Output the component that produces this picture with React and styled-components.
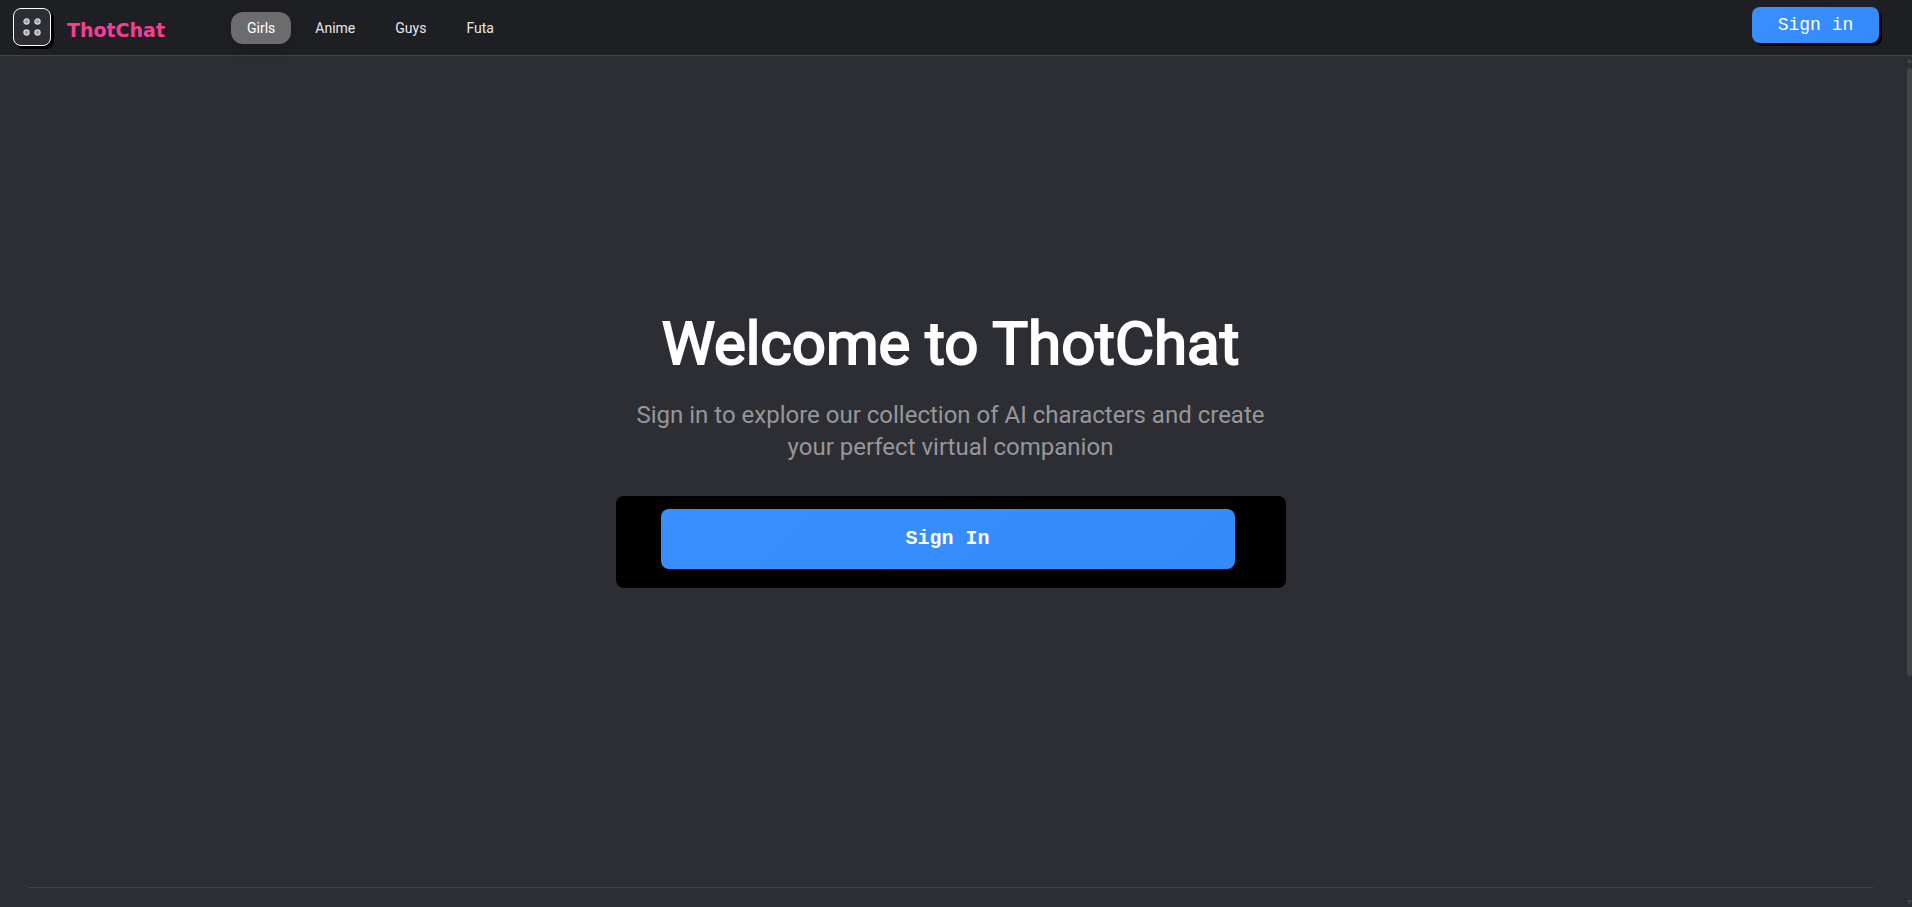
import React from "react";
import styled, { createGlobalStyle } from "styled-components";

const GlobalStyle = createGlobalStyle`
  *, *::before, *::after { box-sizing: border-box; }
  body {
    margin: 0;
    background: #2d2e33;
    color: #fff;
    font-family: Roboto, "Liberation Sans", sans-serif;
  }
`;

const Page = styled.div`
  height: 100vh;
  display: flex;
  flex-direction: column;
`;

const Header = styled.header`
  display: flex;
  align-items: flex-start;
  height: 56px;
  flex: none;
  padding: 0 33px 0 13px;
  background: #1e1f22;
  border-bottom: 1px solid #434447;
`;

const MenuButton = styled.button`
  display: grid;
  place-items: center;
  width: 38px;
  height: 38px;
  margin-top: 8px;
  padding: 0;
  border: 1px solid #fff;
  border-radius: 8px;
  background: #2d2e33;
  box-shadow: 3px 3px 0 #000;
`;

const Logo = styled.a`
  width: 164px;
  margin: 18px 0 0 16px;
  color: #f53f97;
  font-family: "DejaVu Sans", sans-serif;
  font-size: 19px;
  font-weight: 700;
  line-height: 24px;
  text-decoration: none;
`;

const Nav = styled.nav`
  display: flex;
  flex: 1;
  gap: 8px;
  margin-top: 12px;
`;

const NavLink = styled.a`
  padding: 0 16px;
  border-radius: 12px;
  color: ${(p) => (p.$active ? "#fff" : "#e8e8e9")};
  background: ${(p) => (p.$active ? "#6c6c6e" : "transparent")};
  box-shadow: ${(p) => (p.$active ? "0 4px 12px rgba(0, 0, 0, 0.15)" : "none")};
  font-size: 14px;
  font-weight: 400;
  line-height: 32px;
  text-decoration: none;
`;

const BlueButton = styled.button`
  border: 0;
  border-radius: 8px;
  color: #fff;
  background: linear-gradient(135deg, #3a8fff, #348af8);
  font-family: "Liberation Mono", monospace;
`;

const HeaderSignIn = styled(BlueButton)`
  width: 127px;
  height: 36px;
  margin-top: 7px;
  padding: 0;
  box-shadow: 3px 3px 0 #000;
  font-size: 18px;
`;

const Content = styled.div`
  display: flex;
  flex: 1;
  min-height: 0;
`;

const Main = styled.main`
  display: flex;
  flex: 1;
  flex-direction: column;
  padding: 0 34px 0 28px;
`;

const Hero = styled.section`
  display: flex;
  flex: 1;
  flex-direction: column;
  align-items: center;
  justify-content: center;
  padding-bottom: 48px;
  text-align: center;
`;

const Title = styled.h1`
  margin: 0 0 19px;
  font-size: 60px;
  font-weight: 400;
  line-height: 72px;
  -webkit-text-stroke: 2px #fff;
`;

const Subtitle = styled.p`
  max-width: 670px;
  margin: 0 0 33px;
  color: #97979a;
  font-size: 24px;
  line-height: 32px;
`;

const SignInPanel = styled.div`
  width: 100%;
  max-width: 670px;
  padding: 13px 51px 19px 45px;
  border-radius: 8px;
  background: #000;
`;

const HeroSignIn = styled(BlueButton)`
  display: block;
  width: 100%;
  height: 60px;
  font-size: 20px;
  font-weight: 700;
`;

const Divider = styled.hr`
  width: 100%;
  height: 1px;
  margin: 0 0 19px;
  border: 0;
  background: #434448;
`;

const ScrollBar = styled.div`
  display: flex;
  flex-direction: column;
  width: 5px;
  padding: 3px 0;
`;

const ScrollThumb = styled.div`
  height: 72%;
  margin: 5px 0 auto;
  border-radius: 3px;
  background: #434448;
`;

const Arrow = ({ down }) => (
  <svg width="5" height="4" viewBox="0 0 5 4" aria-hidden="true">
    <path d={down ? "M0 0h5L3 4H2z" : "M0 4h5L3 0H2z"} fill="#434448" />
  </svg>
);

const links = ["Girls", "Anime", "Guys", "Futa"];

export default function App() {
  return (
    <Page>
      <GlobalStyle />
      <Header>
        <MenuButton aria-label="Menu">
          <svg width="18" height="18" viewBox="0 0 18 18" fill="#a0a1a3" stroke="#d8d8da" strokeWidth="1.2">
            <circle cx="3.5" cy="3.5" r="2.6" />
            <circle cx="14.5" cy="3.5" r="2.6" />
            <circle cx="3.5" cy="14.5" r="2.6" />
            <circle cx="14.5" cy="14.5" r="2.6" />
          </svg>
        </MenuButton>
        <Logo href="#">ThotChat</Logo>
        <Nav>
          {links.map((label, i) => (
            <NavLink key={label} href="#" $active={i === 0}>{label}</NavLink>
          ))}
        </Nav>
        <HeaderSignIn>Sign in</HeaderSignIn>
      </Header>
      <Content>
        <Main>
          <Hero>
            <Title>Welcome to ThotChat</Title>
            <Subtitle>
              Sign in to explore our collection of AI characters and create your perfect virtual companion
            </Subtitle>
            <SignInPanel>
              <HeroSignIn>Sign In</HeroSignIn>
            </SignInPanel>
          </Hero>
          <Divider />
        </Main>
        <ScrollBar>
          <Arrow />
          <ScrollThumb />
          <Arrow down />
        </ScrollBar>
      </Content>
    </Page>
  );
}
